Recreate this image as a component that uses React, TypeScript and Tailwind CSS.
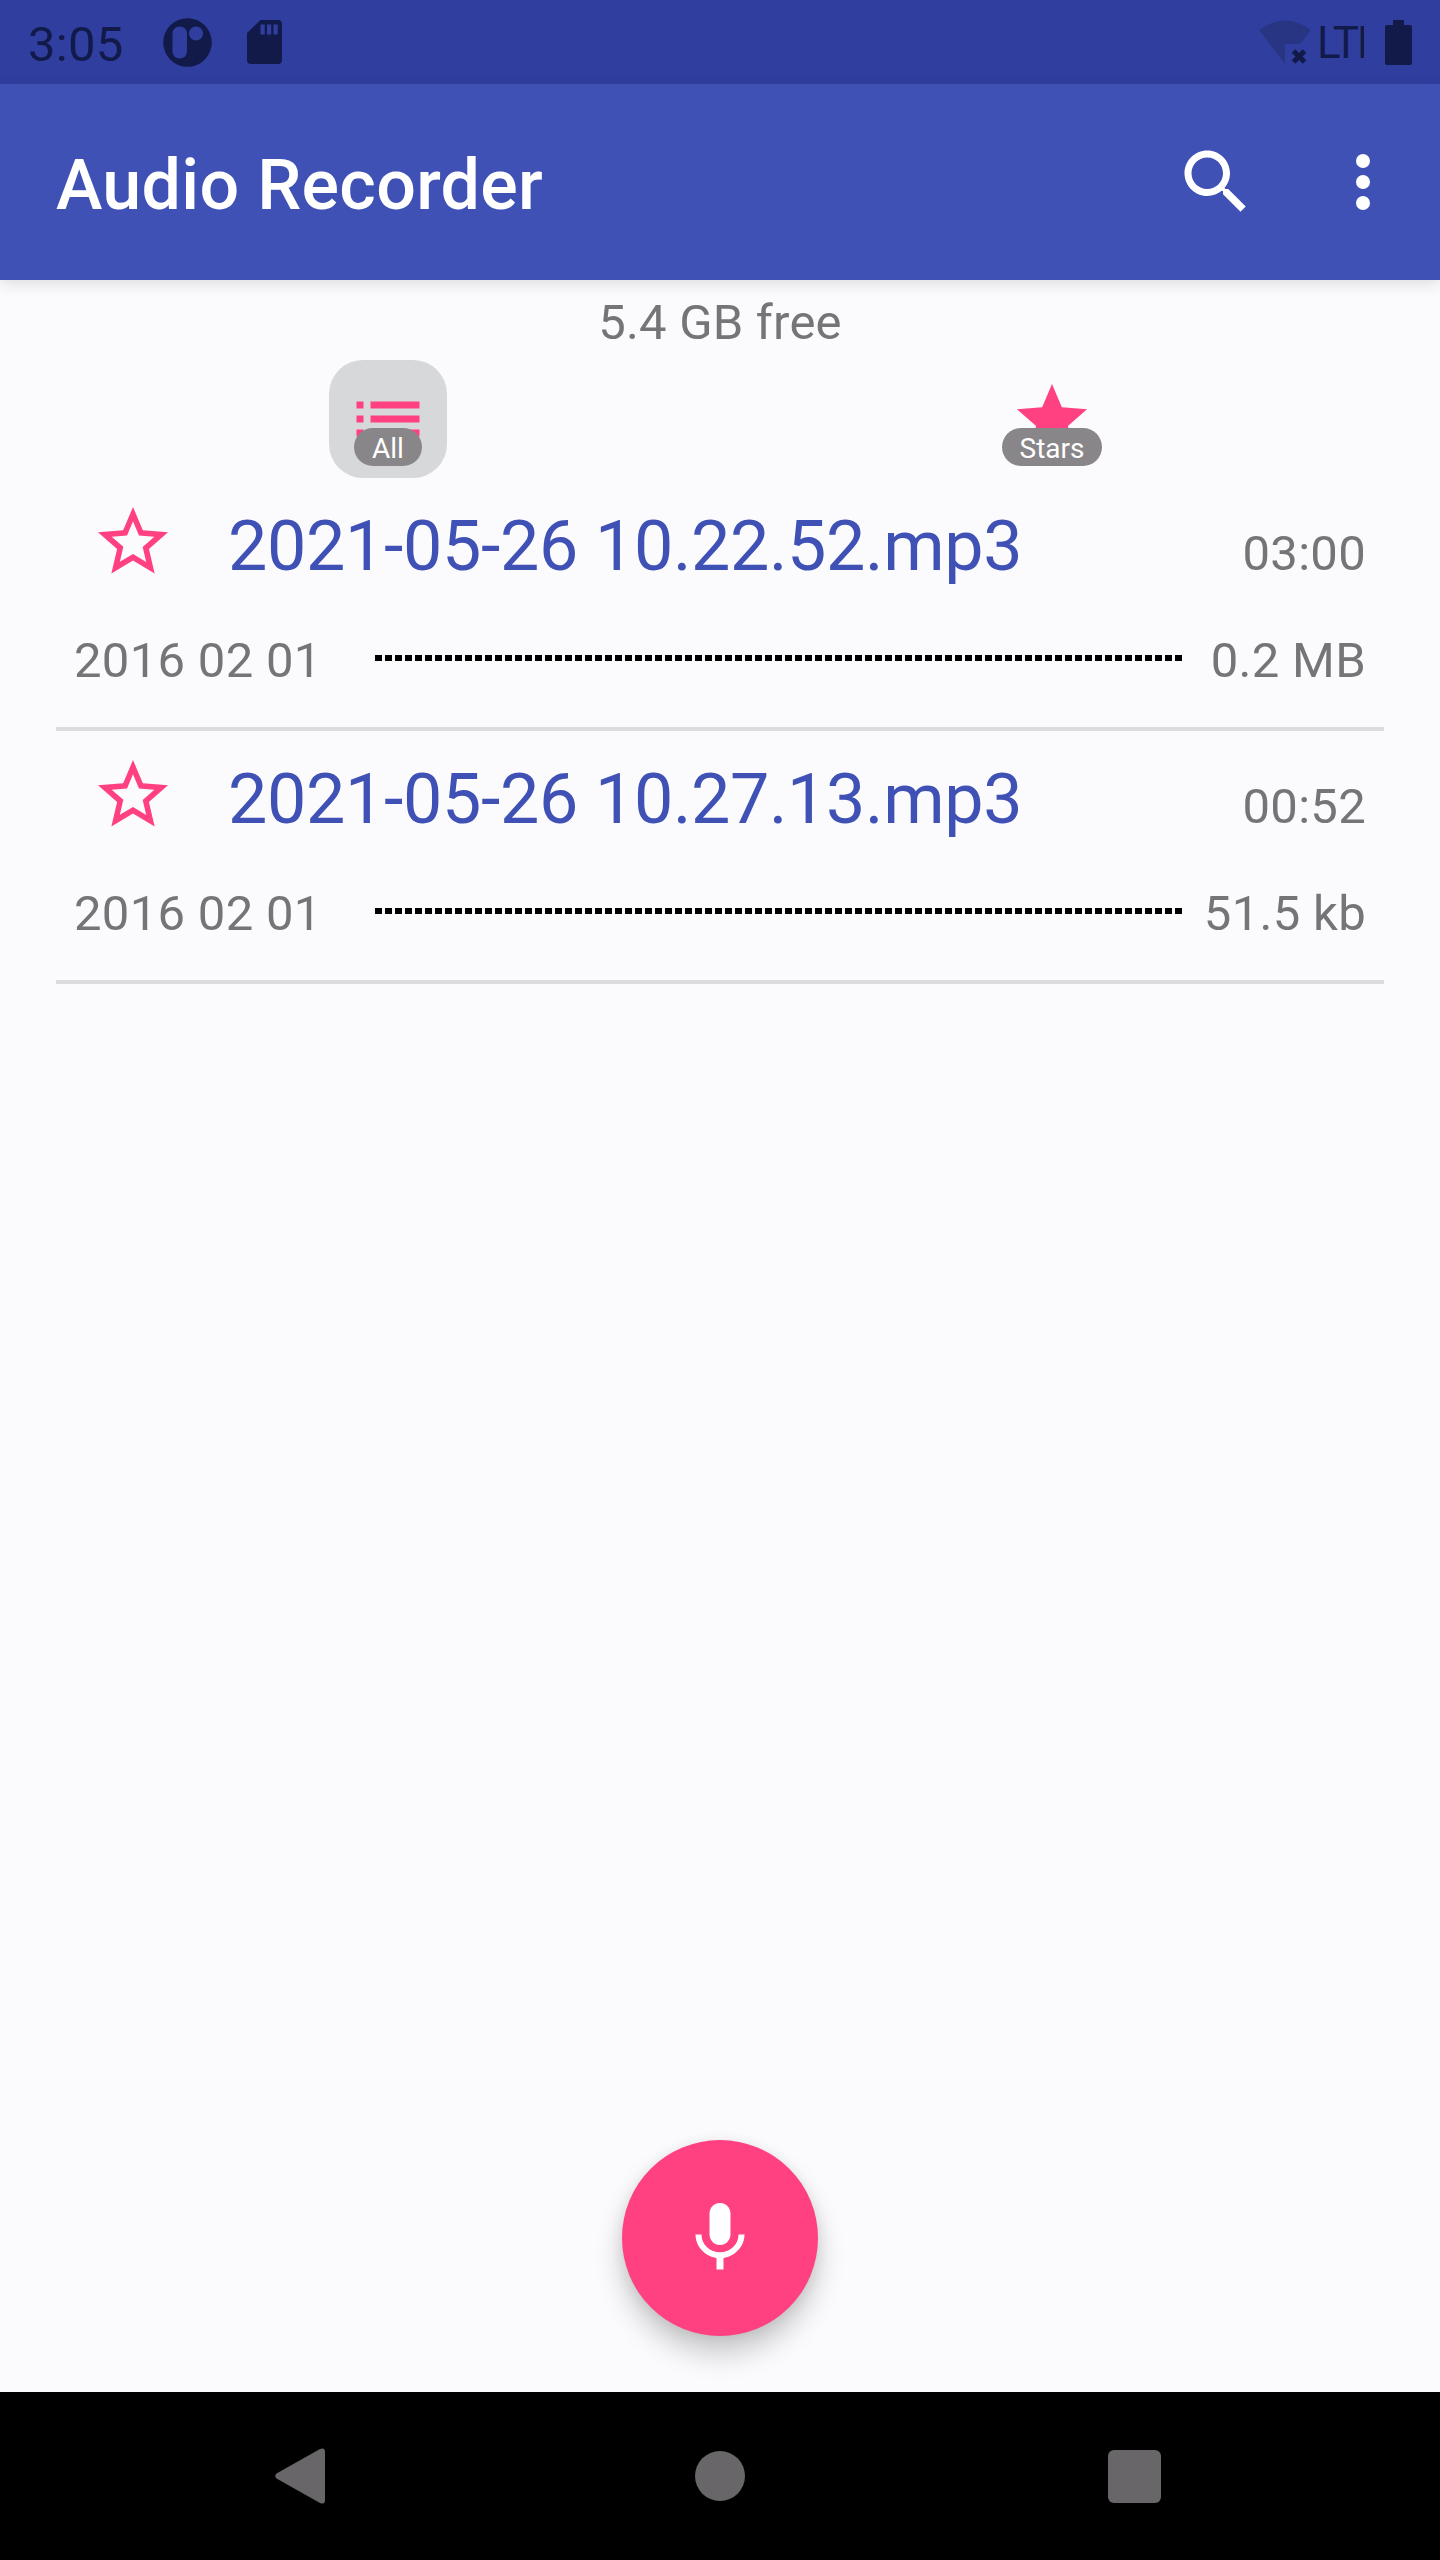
// App.tsx
type Recording = {
  name: string
  duration: string
  date: string
  size: string
}

const recordings: Recording[] = [
  { name: '2021-05-26 10.22.52.mp3', duration: '03:00', date: '2016 02 01', size: '0.2 MB' },
  { name: '2021-05-26 10.27.13.mp3', duration: '00:52', date: '2016 02 01', size: '51.5 kb' },
]

function StatusBar() {
  return (
    <div className="flex h-[84px] shrink-0 items-center bg-[#303f9f] pl-[28px] pr-[28px] text-[#121a4a]">
      <span className="w-[135px] pt-[5px] text-[49px] leading-[84px] tracking-[0.3px]">3:05</span>

      {/* Notification icons */}
      <svg className="h-[49px] w-[49px]" viewBox="0 0 49 49" fill="currentColor">
        <circle cx="24.5" cy="24.5" r="24.3" />
        <rect x="9.5" y="8.5" width="14.5" height="32" rx="7" fill="#303f9f" />
        <circle cx="33" cy="15.5" r="7" fill="#303f9f" />
      </svg>
      <svg className="ml-[35px] h-[44px] w-[35px]" viewBox="0 0 35 44" fill="currentColor">
        <path d="M13.5 0H31a4 4 0 0 1 4 4v36a4 4 0 0 1-4 4H4a4 4 0 0 1-4-4V13z" />
        <path d="M13.5 4.5h4.2v10h-4.2zM20 4.5h4.2v10H20zM26.5 4.5h4.2v10h-4.2z" fill="#303f9f" />
      </svg>

      {/* System icons */}
      <svg className="ml-auto h-[44px] w-[52px]" viewBox="0 0 52 44">
        <path d="M0 10Q26-9 52 10L41 24H26v20Z" fill="#283583" />
        <path d="M34.5 31l11 11M45.5 31l-11 11" stroke="currentColor" strokeWidth="5" />
      </svg>
      <span className="ml-[6px] w-[47px] overflow-hidden pt-[1px] text-[44px] leading-[84px] tracking-[-2px]">LTE</span>
      <svg className="ml-[21px] h-[45px] w-[27px]" viewBox="0 0 27 45" fill="currentColor">
        <path d="M8 0h11v5h6a2 2 0 0 1 2 2v36a2 2 0 0 1-2 2H2a2 2 0 0 1-2-2V7a2 2 0 0 1 2-2h6z" />
      </svg>
    </div>
  )
}

function AppBar() {
  return (
    <header className="z-10 flex h-[196px] shrink-0 items-center bg-[#3f51b5] pl-[56px] pr-[35px] text-white shadow-[0_4px_14px_rgba(0,0,0,0.12)]">
      <h1 className="pt-[6px] text-[70px] font-medium leading-[84px] tracking-[0.3px]">Audio Recorder</h1>
      <svg className="ml-auto h-[84px] w-[84px]" viewBox="0 0 24 24" fill="currentColor">
        <path d="M15.5 14h-.79l-.28-.27C15.41 12.59 16 11.11 16 9.5 16 5.91 13.09 3 9.5 3S3 5.91 3 9.5 5.91 16 9.5 16c1.61 0 3.09-.59 4.23-1.57l.27.28v.79l5 4.99L20.49 19l-4.99-5zm-6 0C7.01 14 5 11.99 5 9.5S7.01 5 9.5 5 14 7.01 14 9.5 11.99 14 9.5 14z" />
      </svg>
      <svg className="ml-[63px] h-[84px] w-[84px]" viewBox="0 0 24 24" fill="currentColor">
        <circle cx="12" cy="6" r="2" />
        <circle cx="12" cy="12" r="2" />
        <circle cx="12" cy="18" r="2" />
      </svg>
    </header>
  )
}

function Filters() {
  return (
    <div className="mt-[9px] grid grid-cols-2 justify-items-center text-[28px] leading-[41px] text-white">
      {/* All */}
      <button className="relative flex h-[118px] w-[118px] items-center justify-center rounded-[34px] bg-[#d6d8d9]">
        <svg className="h-[84px] w-[84px]" viewBox="0 0 24 24" fill="#ff4081">
          <path d="M3 13h2v-2H3v2zm0 4h2v-2H3v2zm0-8h2V7H3v2zm4 4h14v-2H7v2zm0 4h14v-2H7v2zM7 7v2h14V7H7z" />
        </svg>
        <span className="absolute bottom-[12px] h-[38px] w-[68px] rounded-full bg-[#888688]">All</span>
      </button>

      {/* Stars */}
      <button className="relative flex h-[118px] w-[118px] items-center justify-center">
        <svg className="h-[84px] w-[84px]" viewBox="0 0 24 24" fill="#ff4081">
          <path d="M12 17.27L18.18 21l-1.64-7.03L22 9.24l-7.19-.61L12 2 9.19 8.63 2 9.24l5.46 4.73L5.82 21z" />
        </svg>
        <span className="absolute bottom-[12px] h-[38px] w-[100px] rounded-full bg-[#888688]">Stars</span>
      </button>
    </div>
  )
}

function RecordingRow({ item }: { item: Recording }) {
  return (
    <li className="h-[253px] border-b-4 border-[#dcdbdd] px-[18px] pt-[23px] text-[49px] leading-[57px] tracking-[0.3px] text-[#757477]">
      <div className="flex h-[90px] items-baseline">
        <svg className="-mt-px ml-[17px] h-[84px] w-[84px] self-start" viewBox="0 0 24 24" fill="#ff4081">
          <path d="M22 9.24l-7.19-.62L12 2 9.19 8.63 2 9.24l5.46 4.73L5.82 21 12 17.27 18.18 21l-1.63-7.03L22 9.24zM12 15.4l-3.76 2.27 1-4.28-3.32-2.88 4.38-.38L12 6.1l1.71 4.04 4.38.38-3.32 2.88 1 4.28L12 15.4z" />
        </svg>
        <span className="ml-[53px] text-[70px] leading-[90px] tracking-[-0.35px] text-[#3f51b5]">{item.name}</span>
        <span className="ml-auto">{item.duration}</span>
      </div>
      <div className="mt-[41px] flex h-[57px] items-center">
        <span className="w-[301px]">{item.date}</span>
        <svg className="mb-[5px] h-[6px] w-[807px]" viewBox="0 0 807 6">
          <path d="M0 3h807" stroke="#000" strokeWidth="6" strokeDasharray="7 3" />
        </svg>
        <span className="ml-auto">{item.size}</span>
      </div>
    </li>
  )
}

function NavigationBar() {
  return (
    <nav className="flex h-[168px] shrink-0 items-center bg-black pl-[275px] pr-[279px] text-[#686668]">
      <svg className="h-[56px] w-[50px]" viewBox="0 0 50 56" fill="currentColor">
        <path d="M1.5 25.5L45 1Q50-1 50 4v48q0 5-5 3L1.5 30.5Q-1 28 1.5 25.5z" />
      </svg>
      <div className="ml-[370px] h-[50px] w-[50px] rounded-full bg-[#686668]"></div>
      <div className="ml-auto h-[53px] w-[53px] rounded-[6px] bg-[#686668]"></div>
    </nav>
  )
}

export default function App() {
  return (
    <div className="flex h-[2560px] w-[1440px] flex-col overflow-hidden bg-[#fbfafc] font-['Roboto',sans-serif]">
      <StatusBar />
      <AppBar />

      <main className="flex grow flex-col px-[56px] pb-[56px] pt-[14px]">
        <p className="text-center text-[49px] leading-[57px] tracking-[0.2px] text-[#757477]">5.4 GB free</p>
        <Filters />
        <ul>
          {recordings.map((item) => (
            <RecordingRow key={item.name} item={item} />
          ))}
        </ul>

        {/* Record button */}
        <button className="mx-auto mt-auto flex h-[196px] w-[196px] items-center justify-center rounded-full bg-[#ff4081] shadow-[0_18px_28px_rgba(0,0,0,0.2),0_2px_14px_rgba(0,0,0,0.08)]">
          <svg className="h-[84px] w-[84px]" viewBox="0 0 24 24" fill="#fff">
            <path d="M12 14c1.66 0 2.99-1.34 2.99-3L15 5c0-1.66-1.34-3-3-3S9 3.34 9 5v6c0 1.66 1.34 3 3 3zm5.3-3c0 3-2.54 5.1-5.3 5.1S6.7 14 6.7 11H5c0 3.41 2.72 6.23 6 6.72V21h2v-3.28c3.28-.48 6-3.3 6-6.72h-1.7z" />
          </svg>
        </button>
      </main>

      <NavigationBar />
    </div>
  )
}
